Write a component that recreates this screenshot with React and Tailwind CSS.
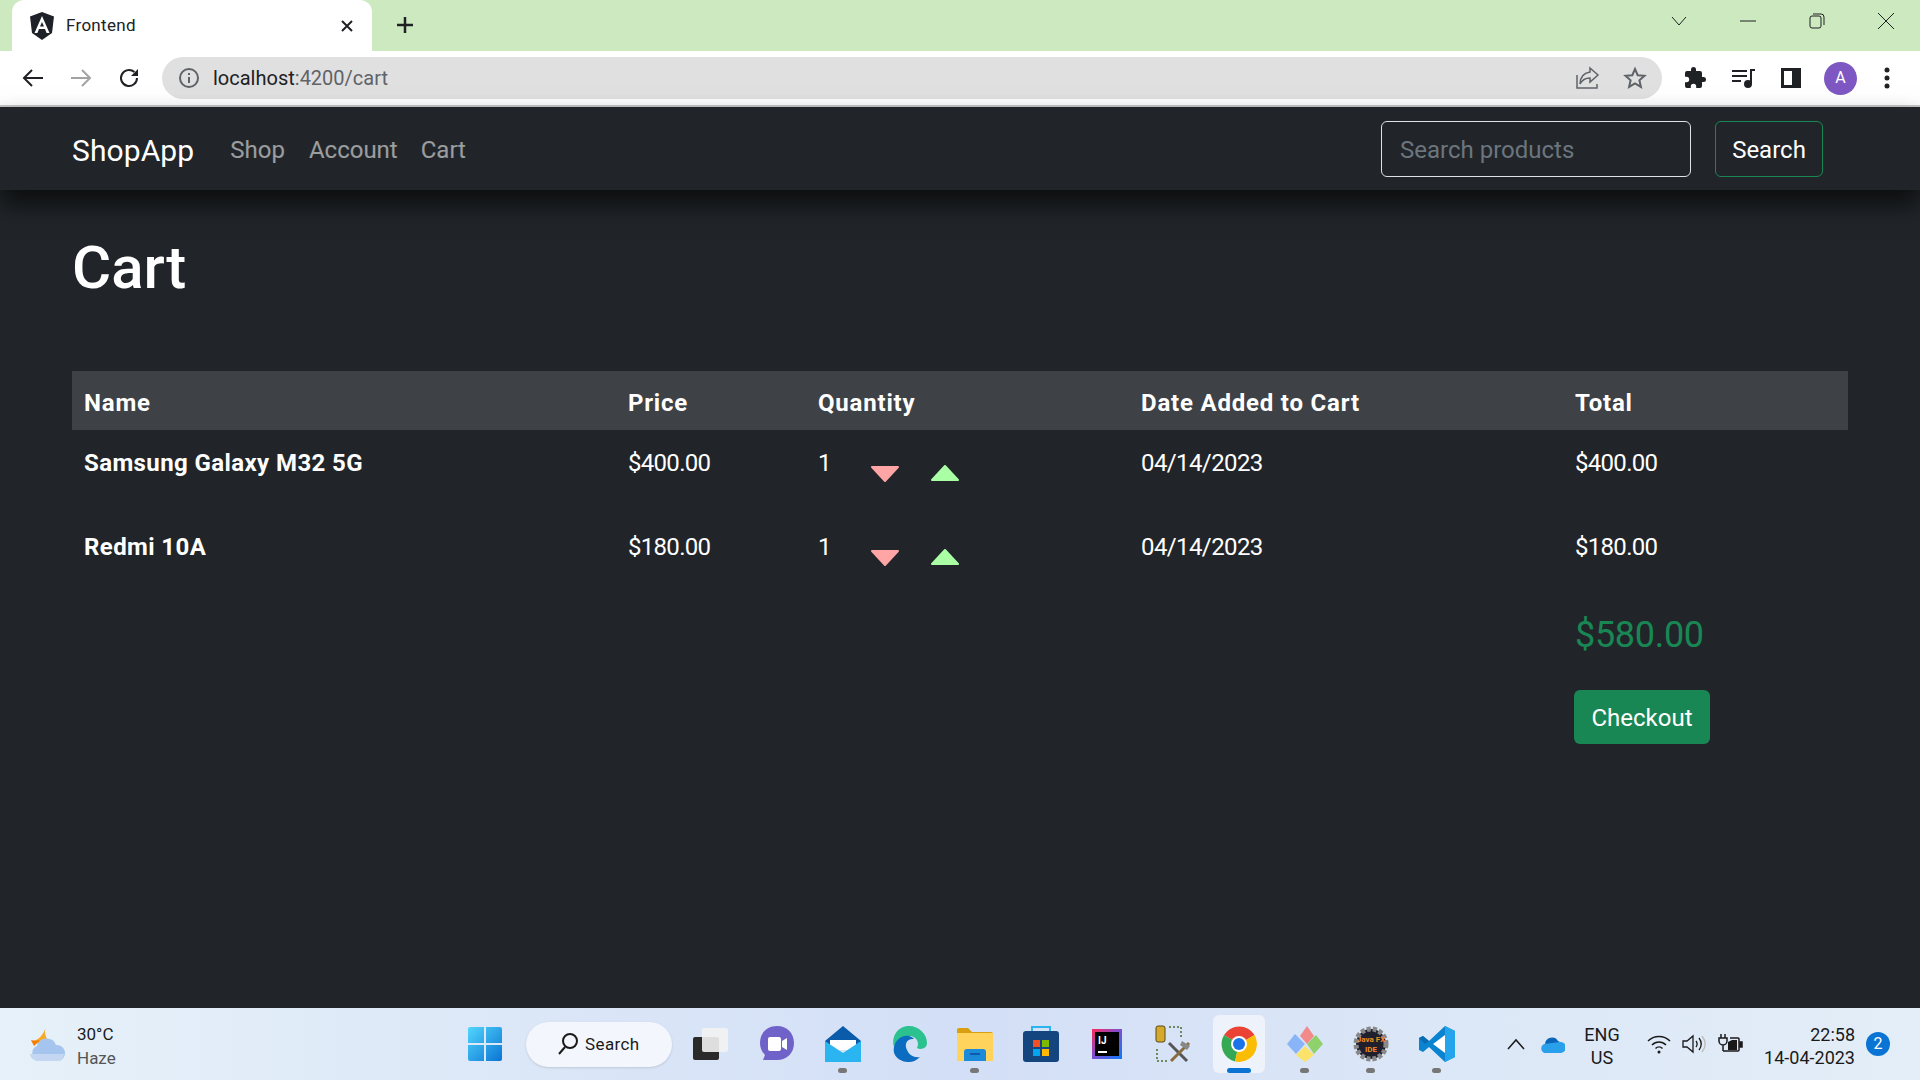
import React from 'react'

const Angular = () => (
    <svg width="26" height="28" viewBox="0 0 26 28">
        <path d="M13 0 L25 4.5 L23 21 L13 28 L3 21 L1 4.5 Z" fill="#1e2228" />
        <path d="M13 4 L20.5 21 H17.6 L16 17 H10 L8.4 21 H5.5 Z M13 10 L11 14.6 H15 Z" fill="#fff" fillRule="evenodd" />
    </svg>
)

const Back = ({ color }) => (
    <svg width="24" height="24" viewBox="0 0 24 24" fill="none" stroke={color} strokeWidth="2">
        <path d="M22 12H3M11 4l-8 8 8 8" />
    </svg>
)

const Forward = () => (
    <svg width="24" height="24" viewBox="0 0 24 24" fill="none" stroke="#a3a3a3" strokeWidth="2">
        <path d="M2 12h19M13 4l8 8-8 8" />
    </svg>
)

const Reload = () => (
    <svg width="24" height="24" viewBox="0 0 24 24" fill="none">
        <path d="M20 12a8 8 0 1 1-2.6-5.9" stroke="#202124" strokeWidth="2" />
        <path d="M21 3v7h-7z" fill="#202124" />
    </svg>
)

const Info = () => (
    <svg width="22" height="22" viewBox="0 0 22 22" fill="none">
        <circle cx="11" cy="11" r="9" stroke="#5f6368" strokeWidth="2" />
        <path d="M10 10h2v6h-2zM10 6h2v2h-2z" fill="#5f6368" />
    </svg>
)

const Share = () => (
    <svg width="26" height="26" viewBox="0 0 26 26" fill="none" stroke="#5f6368" strokeWidth="1.5">
        <path d="M2 10v13h20v-4" />
        <path d="M15 3l8 7-8 7v-4c-5 0-8 2-10 6 0-7 4-11 10-12z" />
    </svg>
)

const Star = () => (
    <svg width="24" height="24" viewBox="0 0 24 24" fill="none" stroke="#5f6368" strokeWidth="2">
        <path d="M12 3l2.7 6.2 6.8.6-5.1 4.5 1.5 6.6L12 17.4l-5.9 3.5 1.5-6.6L2.500 9.800l6.800-.6z" />
    </svg>
)

const Puzzle = () => (
    <svg width="24" height="24" viewBox="0 0 24 24" fill="#202124">
        <path d="M20.500 11H19V7a2 2 0 0 0-2-2h-4V3.500a2.500 2.500 0 0 0-5 0V5H4a2 2 0 0 0-2 2v3.800h1.500a2.700 2.700 0 0 1 0 5.400H2V20a2 2 0 0 0 2 2h3.800v-1.500a2.700 2.700 0 0 1 5.400 0V22H17a2 2 0 0 0 2-2v-4h1.500a2.500 2.500 0 0 0 0-5z" />
    </svg>
)

const Media = () => (
    <svg width="26" height="24" viewBox="0 0 26 24" fill="none" stroke="#202124" strokeWidth="2">
        <path d="M2 5h15M2 10h15M2 15h9" />
        <path d="M21 5v13" />
        <path d="M20 4h5" />
        <circle cx="18" cy="18" r="3" fill="#202124" />
    </svg>
)

const SidePanel = () => (
    <svg width="22" height="22" viewBox="0 0 22 22">
        <path d="M1 1h20v20H1z" fill="#202124" />
        <path d="M4 4h8v14H4z" fill="#fff" />
    </svg>
)

const Triangle = ({ up }) => (
    <svg width="28" height="16" viewBox="0 0 28 16" fill={up ? '#aaffa5' : '#ffa5a5'} stroke={up ? '#aaffa5' : '#ffa5a5'} strokeWidth="2" strokeLinejoin="round">
        {up ? <path d="M14 1 L27 15 H1 Z" /> : <path d="M1 1 H27 L14 15 Z" />}
    </svg>
)

const Weather = () => (
    <svg width="38" height="38" viewBox="0 0 38 38">
        <path d="M18 1c-2 6-1 12 4 16-5 3-13 3-19-1 5 1 13-5 15-15z" fill="#f9a825" />
        <path d="M3 15c3 1 6 1 9 0l-6 6z" fill="#f57c00" />
        <path d="M10 36a8 8 0 0 1-1-15 10 10 0 0 1 19-1 8 8 0 0 1 2 16z" fill="#a5c4ee" />
        <path d="M10 36a8 8 0 0 1-8-7h34a8 8 0 0 1-6 7z" fill="#c3d7f3" />
    </svg>
)

const WinLogo = () => (
    <svg width="34" height="34" viewBox="0 0 34 34">
        <defs>
            <linearGradient id="winA" x1="0" y1="0" x2="1" y2="1">
                <stop offset="0" stopColor="#52d6fc" />
                <stop offset="1" stopColor="#0a74d4" />
            </linearGradient>
        </defs>
        <path d="M0 2a2 2 0 0 1 2-2h14v16H0zM18 0h14a2 2 0 0 1 2 2v14H18zM0 18h16v16H2a2 2 0 0 1-2-2zM18 18h16v14a2 2 0 0 1-2 2H18z" fill="url(#winA)" />
    </svg>
)

const SearchGlass = () => (
    <svg width="22" height="24" viewBox="0 0 22 24" fill="none" stroke="#1a1a1a" strokeWidth="2">
        <circle cx="13" cy="9" r="7" />
        <path d="M8 15l-6 7" />
    </svg>
)

const TaskView = () => (
    <svg width="38" height="34" viewBox="0 0 38 34">
        <rect x="1" y="10" width="26" height="23" rx="2" fill="#2a2a2a" />
        <rect x="10" y="1" width="26" height="24" rx="2" fill="#f2f2f2" opacity="0.9" />
    </svg>
)

const Chat = () => (
    <svg width="34" height="36" viewBox="0 0 34 36">
        <path d="M17 0c10 0 17 7 17 17s-7 17-17 17H3l2-5C2 26 0 22 0 17 0 7 7 0 17 0z" fill="#6f63c9" />
        <rect x="8" y="11" width="13" height="14" rx="2" fill="#fff" />
        <path d="M22 15l5-3v12l-5-3z" fill="#fff" />
    </svg>
)

const Mail = () => (
    <svg width="36" height="36" viewBox="0 0 36 36">
        <path d="M18 0L36 15v5H0v-5z" fill="#0a5cab" />
        <path d="M5 14h26v10H5z" fill="#fff" />
        <path d="M0 15l18 12 18-12v21H0z" fill="#2bb5f0" />
    </svg>
)

const Edge = () => (
    <svg width="36" height="36" viewBox="0 0 36 36">
        <path d="M18 0c10 0 18 8 18 17 0 6-7 7-10 5 3-6-1-12-8-12C10 10 5 15 3 21 0 10 7 0 18 0z" fill="#2cc28f" />
        <path d="M3 21C5 13 11 9 18 10c4 1 5 3 5 3-7-1-10 5-7 11 2 5 7 8 13 7-3 3-7 5-11 5C9 36 1 30 3 21z" fill="#0c6cc0" />
    </svg>
)

const Folder = () => (
    <svg width="36" height="34" viewBox="0 0 36 34">
        <path d="M0 3a2 2 0 0 1 2-2h9l4 4h19a2 2 0 0 1 2 2v4H0z" fill="#d99f0e" />
        <path d="M0 6h36v28H0z" fill="#ffd35c" />
        <path d="M7 34v-9a3 3 0 0 1 3-3h16a3 3 0 0 1 3 3v9z" fill="#1b8ad8" />
        <path d="M13 26h10v2H13z" fill="#0a5cab" />
    </svg>
)

const Store = () => (
    <svg width="36" height="36" viewBox="0 0 36 36">
        <path d="M9 6V1h18v5" fill="none" stroke="#2bb5f0" strokeWidth="2" />
        <rect x="0" y="5" width="36" height="31" rx="3" fill="#15457e" />
        <path d="M10 14h7v7h-7z" fill="#f25022" />
        <path d="M19 14h7v7h-7z" fill="#7fba00" />
        <path d="M10 23h7v7h-7z" fill="#00a4ef" />
        <path d="M19 23h7v7h-7z" fill="#ffb900" />
    </svg>
)

const Idea = () => (
    <svg width="30" height="30" viewBox="0 0 30 30">
        <defs>
            <linearGradient id="ijA" x1="0" y1="0" x2="1" y2="1">
                <stop offset="0" stopColor="#fe2857" />
                <stop offset="0.5" stopColor="#7a4fd6" />
                <stop offset="1" stopColor="#087cfa" />
            </linearGradient>
        </defs>
        <rect width="30" height="30" fill="url(#ijA)" />
        <rect x="3" y="3" width="24" height="24" fill="#000" />
        <text x="6" y="15" fill="#fff" fontSize="10" fontWeight="700" fontFamily="Roboto, sans-serif">IJ</text>
        <path d="M6 22h9v2H6z" fill="#fff" />
    </svg>
)

const Tools = () => (
    <svg width="36" height="38" viewBox="0 0 36 38" fill="none">
        <rect x="1" y="1" width="9" height="16" rx="2" fill="#d6a92c" stroke="#5a4a1a" />
        <path d="M14 2h12v12M2 24v12h10" stroke="#6b8a5e" strokeWidth="2" strokeDasharray="2 2" />
        <path d="M14 18l18 18" stroke="#555" strokeWidth="3" />
        <path d="M34 18L16 36" stroke="#8a6b3d" strokeWidth="3" />
        <path d="M27 16l8 5-3 4-7-5z" fill="#888" />
    </svg>
)

const Chrome = () => (
    <svg width="36" height="36" viewBox="0 0 36 36">
        <path d="M18 18L3 9A18 18 0 0 1 33.600 9z" fill="#ea4335" />
        <path d="M18 18L3 9A18 18 0 0 0 14 35.500z" fill="#34a853" />
        <path d="M18 18L14 35.500A18 18 0 0 0 33.600 9z" fill="#fbbc04" />
        <circle cx="18" cy="18" r="8" fill="#fff" />
        <circle cx="18" cy="18" r="6" fill="#1a73e8" />
    </svg>
)

const Gitkraken = () => (
    <svg width="36" height="36" viewBox="0 0 36 36">
        <path d="M18 18L25 10 18 0 11 10z" fill="#f28a8a" transform="translate(2 0)" />
        <path d="M18 18L8 8 0 18 9 28z" fill="#8ab4f8" />
        <path d="M20 18L29 9 36 18 27 28z" fill="#8fd16a" />
        <path d="M18 20L9 29 18 36 27 29z" fill="#fbe36b" />
    </svg>
)

const JavaFx = () => (
    <svg width="36" height="36" viewBox="0 0 36 36">
        <circle cx="18" cy="18" r="15" fill="#1f1f2e" stroke="#888" strokeWidth="5" strokeDasharray="4 2" />
        <text x="18" y="16" textAnchor="middle" fill="#f28c1c" fontSize="8" fontWeight="700" fontFamily="Roboto, sans-serif">Java FX</text>
        <text x="18" y="26" textAnchor="middle" fill="#f28c1c" fontSize="8" fontWeight="700" fontFamily="Roboto, sans-serif">IDE</text>
    </svg>
)

const VsCode = () => (
    <svg width="36" height="36" viewBox="0 0 36 36">
        <path d="M26 0l10 5v26l-10 5L10 21l-6 5-4-2V12l4-2 6 5z" fill="#0a84d0" />
        <path d="M26 9L14 18l12 9z" fill="#fff" />
        <path d="M0 12l4-2 6 5-4 3z" fill="#0a6cb0" />
        <path d="M26 0l10 5v26l-10 5z" fill="#24a4ea" />
    </svg>
)

const Wifi = () => (
    <svg width="24" height="20" viewBox="0 0 24 20" fill="none" stroke="#1a1a1a" strokeWidth="1.500">
        <path d="M1 7c6-6 16-6 22 0M5 11c4-4 10-4 14 0M8.500 14.500c2-2 5-2 7 0" />
        <circle cx="12" cy="18" r="1.500" fill="#1a1a1a" stroke="none" />
    </svg>
)

const Speaker = () => (
    <svg width="24" height="20" viewBox="0 0 24 20" fill="none" stroke="#1a1a1a" strokeWidth="1.300">
        <path d="M1 7h4l6-5v16l-6-5H1z" />
        <path d="M14 7c1.500 2 1.500 4 0 6M17 4c3 4 3 8 0 12" />
        <path d="M20 2c4 5 4 11 0 16" stroke="#bbb" />
    </svg>
)

const Battery = () => (
    <svg width="26" height="22" viewBox="0 0 26 22" fill="none" stroke="#1a1a1a" strokeWidth="1.500">
        <path d="M4 1v4M8 1v4M2 5h8v3a4 4 0 0 1-8 0zM6 12v6" />
        <path d="M6 18h15a1 1 0 0 0 1-1V6a1 1 0 0 0-1-1h-8" />
        <path d="M23 9h2v5h-2z" fill="#1a1a1a" />
        <path d="M11 17V9l4-2h5v10z" fill="#1a1a1a" stroke="none" />
    </svg>
)

const rows = [
    { name: 'Samsung Galaxy M32 5G', price: '$400.00', date: '04/14/2023' },
    { name: 'Redmi 10A', price: '$180.00', date: '04/14/2023' },
]

const apps = [
    { icon: <TaskView /> },
    { icon: <Chat /> },
    { icon: <Mail />, dot: true },
    { icon: <Edge /> },
    { icon: <Folder />, dot: true },
    { icon: <Store /> },
    { icon: <Idea /> },
    { icon: <Tools /> },
    { icon: <Chrome />, active: true },
    { icon: <Gitkraken />, dot: true },
    { icon: <JavaFx />, dot: true },
    { icon: <VsCode />, dot: true },
]

const App = () => {
    return (
        <div className="w-[1920px] h-[1080px] flex flex-col overflow-hidden bg-[#212529] font-['Roboto',sans-serif] text-white">
            {/* tab strip */}
            <div className="h-[51px] shrink-0 bg-[#cce9bf] flex items-end text-[#202124]">
                <div className="ml-[12px] w-[360px] h-[51px] bg-white rounded-t-[12px] flex items-center pl-[17px] pr-[18px]">
                    <Angular />
                    <span className="ml-[11px] text-[17px] tracking-[0.3px]">Frontend</span>
                    <svg className="ml-auto" width="14" height="14" viewBox="0 0 14 14" stroke="#202124" strokeWidth="2">
                        <path d="M2 2l10 10M12 2L2 12" />
                    </svg>
                </div>
                <svg className="ml-[23px] mb-[16px]" width="20" height="20" viewBox="0 0 20 20" stroke="#202124" strokeWidth="2.500">
                    <path d="M10 2v16M2 10h16" />
                </svg>
                <div className="ml-auto h-[51px] flex items-start pt-[12px] pr-[25px] gap-[51px]">
                    <svg width="18" height="18" viewBox="0 0 18 18" fill="none" stroke="#202124" strokeWidth="1">
                        <path d="M2 5l7 8 7-8" />
                    </svg>
                    <svg width="18" height="18" viewBox="0 0 18 18" fill="none" stroke="#202124" strokeWidth="1">
                        <path d="M1 9h16" />
                    </svg>
                    <svg width="18" height="18" viewBox="0 0 18 18" fill="none" stroke="#202124" strokeWidth="1">
                        <rect x="2" y="4" width="11" height="12" rx="2" />
                        <path d="M5 2h8a3 3 0 0 1 3 3v8" />
                    </svg>
                    <svg width="18" height="18" viewBox="0 0 18 18" fill="none" stroke="#202124" strokeWidth="1">
                        <path d="M1 1l16 16M17 1L1 17" />
                    </svg>
                </div>
            </div>

            {/* toolbar */}
            <div className="h-[56px] shrink-0 bg-white border-b-2 border-[#c8c8c8] flex items-center text-[#202124]">
                <div className="ml-[21px] flex items-center gap-[24px]">
                    <Back color="#202124" />
                    <Forward />
                    <Reload />
                </div>
                <div className="ml-[21px] w-[1500px] h-[42px] rounded-full bg-[#e0e0e0] flex items-center pl-[16px] pr-[15px]">
                    <Info />
                    <span className="ml-[13px] text-[20px] text-[#202124]">localhost<span className="text-[#5f6368]">:4200/cart</span></span>
                    <div className="ml-auto flex items-center gap-[22px]">
                        <Share />
                        <Star />
                    </div>
                </div>
                <div className="ml-[21px] flex items-center gap-[23px]">
                    <Puzzle />
                    <Media />
                    <div className="ml-[1px]"><SidePanel /></div>
                    <div className="ml-[-1px] w-[33px] h-[33px] rounded-full bg-[#7e57c2] flex items-center justify-center text-white text-[16px]">A</div>
                    <svg className="ml-[3px]" width="8" height="22" viewBox="0 0 8 22" fill="#202124">
                        <circle cx="4" cy="3" r="2.500" />
                        <circle cx="4" cy="11" r="2.500" />
                        <circle cx="4" cy="19" r="2.500" />
                    </svg>
                </div>
            </div>

            {/* navbar */}
            <nav className="relative z-10 h-[83px] shrink-0 bg-[#212529] shadow-[0_14px_24px_rgba(0,0,0,0.65)] flex items-center pl-[72px] pr-[97px]">
                <span className="text-[30px] pt-[3px] tracking-[0.1px]">ShopApp</span>
                <div className="ml-[36px] flex items-center gap-[24px] text-[24px] text-white/55 pt-[3px]">
                    <span>Shop</span>
                    <span>Account</span>
                    <span className="ml-[-1px]">Cart</span>
                </div>
                <div className="ml-auto flex items-center gap-[24px]">
                    <input
                        placeholder="Search products"
                        className="w-[310px] h-[56px] rounded-[6px] border border-[#dee2e6] bg-[#212529] px-[18px] pt-[3px] text-[24px] placeholder:text-[#6c757d] outline-none"
                    />
                    <button className="w-[108px] h-[56px] rounded-[6px] border border-[#198754] pt-[2px] text-[24px] text-white">Search</button>
                </div>
            </nav>

            {/* page */}
            <main className="flex-1 px-[72px]">
                <h1 className="mt-[42px] text-[60px] leading-[72px] font-medium">Cart</h1>
                <table className="mt-[67px] w-[1776px] table-fixed text-[24px] text-left">
                    <colgroup>
                        <col className="w-[544px]" />
                        <col className="w-[190px]" />
                        <col className="w-[323px]" />
                        <col className="w-[434px]" />
                        <col className="w-[285px]" />
                    </colgroup>
                    <thead>
                        <tr className="h-[59px] bg-[#3e4146] font-bold tracking-[0.8px]">
                            <th className="px-[12px] pt-[5px]">Name</th>
                            <th className="px-[12px] pt-[5px]">Price</th>
                            <th className="px-[12px] pt-[5px]">Quantity</th>
                            <th className="px-[12px] pt-[5px]">Date Added to Cart</th>
                            <th className="px-[12px] pt-[5px]">Total</th>
                        </tr>
                    </thead>
                    <tbody>
                        {rows.map((row) => (
                            <tr key={row.name} className="h-[84px] align-top">
                                <td className="px-[12px] pt-[15px] font-bold tracking-[0.4px]">{row.name}</td>
                                <td className="px-[12px] pt-[15px] tracking-[-0.7px]">{row.price}</td>
                                <td className="px-[12px] pt-[15px]">
                                    <div className="flex items-start">
                                        <span className="w-[53px]">1</span>
                                        <span className="mt-[21px]"><Triangle /></span>
                                        <span className="ml-[32px] mt-[20px]"><Triangle up /></span>
                                    </div>
                                </td>
                                <td className="px-[12px] pt-[15px] tracking-[-0.6px]">{row.date}</td>
                                <td className="px-[12px] pt-[15px] tracking-[-0.7px]">{row.price}</td>
                            </tr>
                        ))}
                        <tr>
                            <td colSpan={4} />
                            <td className="px-[12px] pt-[10px] text-[36px] leading-[54px] tracking-[-0.3px] text-[#198754]">$580.00</td>
                        </tr>
                        <tr>
                            <td colSpan={4} />
                            <td className="pl-[11px] pr-[12px] pt-[28px]">
                                <button className="w-[136px] h-[54px] rounded-[6px] bg-[#198754] pt-[2px] text-white text-[24px]">Checkout</button>
                            </td>
                        </tr>
                    </tbody>
                </table>
            </main>

            {/* taskbar */}
            <footer className="h-[72px] shrink-0 flex items-center bg-gradient-to-r from-[#e6f1f9] via-[#d3dff6] to-[#e4eef8] text-[#1a1a1a]">
                <div className="ml-[28px] w-[440px] flex items-center">
                    <Weather />
                    <div className="ml-[11px] pt-[3px] text-[17px] leading-[24px]">
                        <div>30°C</div>
                        <div className="text-[#555]">Haze</div>
                    </div>
                </div>
                <WinLogo />
                <div className="ml-[24px] w-[146px] h-[45px] rounded-full bg-[#f3f6fd] shadow-sm flex items-center pl-[31px]">
                    <SearchGlass />
                    <span className="ml-[6px] pt-[2px] text-[17px] tracking-[0.4px]">Search</span>
                </div>
                <div className="ml-[6px] flex">
                    {apps.map((app, i) => (
                        <div key={i} className="relative w-[66px] h-[58px] flex items-center justify-center">
                            {app.active && <div className="absolute left-[7px] top-0 w-[52px] h-[58px] rounded-[6px] bg-[#edf2fb] shadow-[3px_1px_0_#dbe4f5]" />}
                            <div className="relative">{app.icon}</div>
                            {app.dot && <div className="absolute bottom-0 left-[28px] w-[9px] h-[5px] rounded-full bg-[#777]" />}
                            {app.active && <div className="absolute bottom-0 left-[21px] w-[24px] h-[5px] rounded-full bg-[#0a74d4]" />}
                        </div>
                    ))}
                </div>
                <div className="ml-[36px] flex items-center">
                    <svg width="20" height="12" viewBox="0 0 20 12" fill="none" stroke="#1a1a1a" strokeWidth="1.500">
                        <path d="M2 11l8-9 8 9" />
                    </svg>
                    <svg className="ml-[13px]" width="26" height="18" viewBox="0 0 26 18">
                        <path d="M6 9a7 7 0 0 1 13-3 5 5 0 0 1 2 1l-8 5z" fill="#0a64b8" />
                        <path d="M21 7a5 5 0 0 1 1 11H5a5 5 0 0 1 0-9z" fill="#2ba0ea" />
                    </svg>
                    <div className="ml-[12px] w-[50px] pt-[3px] text-center text-[18px] leading-[23px]">
                        <div>ENG</div>
                        <div>US</div>
                    </div>
                    <div className="ml-[20px] flex items-center gap-[11px]">
                        <Wifi />
                        <Speaker />
                        <Battery />
                    </div>
                    <div className="ml-[16px] w-[96px] pt-[3px] text-right text-[18px] leading-[23px]">
                        <div>22:58</div>
                        <div>14-04-2023</div>
                    </div>
                    <div className="ml-[11px] w-[24px] h-[24px] rounded-full bg-[#0a74d4] text-white text-[16px] flex items-center justify-center">2</div>
                </div>
            </footer>
        </div>
    )
}

export default App
